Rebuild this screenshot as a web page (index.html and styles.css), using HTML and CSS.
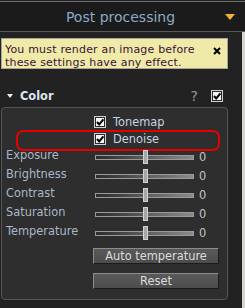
FILE: index.html
```html
<!DOCTYPE html>
<html lang="en">
<head>
    <meta charset="UTF-8">
    <title>Post processing</title>
    <link rel="stylesheet" href="styles.css">
</head>
<body>
    <div class="header">
        <span class="title">Post processing</span>
        <svg class="menu-arrow" width="10" height="6" viewBox="0 0 10 6"><path d="M0 0H10L5 6Z" fill="#f4b232"/></svg>
    </div>

    <div class="main">
        <div class="content">
            <div class="notice">
                <p>You must render an image before<br>these settings have any effect.</p>
                <svg class="notice-close" width="8" height="8" viewBox="0 0 8 8"><path d="M1 1L7 7M7 1L1 7" stroke="#000" stroke-width="2"/></svg>
            </div>

            <div class="section-head">
                <svg class="section-arrow" width="6" height="4" viewBox="0 0 6 4"><path d="M0 0H6L3 4Z" fill="#e8eef4"/></svg>
                <span class="section-title">Color</span>
                <span class="help">?</span>
                <span class="cb"><svg width="10" height="10" viewBox="0 0 10 10"><path d="M2 5L4.2 7.4L8.4 2.4" fill="none" stroke="#000" stroke-width="2"/></svg></span>
            </div>

            <div class="panel">
                <div class="row check-row">
                    <span></span>
                    <label class="check"><span class="cb"><svg width="10" height="10" viewBox="0 0 10 10"><path d="M2 5L4.2 7.4L8.4 2.4" fill="none" stroke="#000" stroke-width="2"/></svg></span>Tonemap</label>
                </div>
                <div class="row check-row marked">
                    <span></span>
                    <label class="check"><span class="cb"><svg width="10" height="10" viewBox="0 0 10 10"><path d="M2 5L4.2 7.4L8.4 2.4" fill="none" stroke="#000" stroke-width="2"/></svg></span>Denoise</label>
                </div>

                <div class="row slider-row">
                    <span class="label">Exposure</span>
                    <div class="slider"><div class="track"><span class="thumb"></span></div><span class="value">0</span></div>
                </div>
                <div class="row slider-row">
                    <span class="label">Brightness</span>
                    <div class="slider"><div class="track"><span class="thumb"></span></div><span class="value">0</span></div>
                </div>
                <div class="row slider-row">
                    <span class="label">Contrast</span>
                    <div class="slider"><div class="track"><span class="thumb"></span></div><span class="value">0</span></div>
                </div>
                <div class="row slider-row">
                    <span class="label">Saturation</span>
                    <div class="slider"><div class="track"><span class="thumb"></span></div><span class="value">0</span></div>
                </div>
                <div class="row slider-row">
                    <span class="label">Temperature</span>
                    <div class="slider"><div class="track"><span class="thumb"></span></div><span class="value">0</span></div>
                </div>

                <div class="buttons">
                    <button class="btn">Auto temperature</button>
                    <button class="btn">Reset</button>
                </div>
            </div>
        </div>
        <div class="edge"></div>
    </div>
</body>
</html>
```

FILE: styles.css
```css
* {
    margin: 0;
    padding: 0;
    box-sizing: border-box;
}

body {
    width: 245px;
    height: 308px;
    overflow: hidden;
    background: #222222;
    font-family: 'DejaVu Sans', Verdana, sans-serif;
    font-size: 11.4px;
}

.header {
    display: flex;
    align-items: center;
    height: 31px;
    margin-top: 1px;
    padding: 0 10px 0 16px;
    background: #1b1b1b;
    border-top: 1px solid #6e6e6e;
    border-bottom: 1px solid #5a5a5a;
}

.title {
    flex: 1;
    text-align: center;
    padding-top: 2px;
    line-height: 27px;
    font-size: 14px;
    color: #8aaac8;
}

.menu-arrow {
    display: block;
}

.main {
    display: flex;
    height: 276px;
}

.content {
    flex: 1;
    padding: 6px 14px 0 1px;
}

.edge {
    width: 3px;
    background: #d6d6ce;
}

.notice {
    display: flex;
    height: 31px;
    padding: 4.8px 0 0 3px;
    background: #efeaa8;
    border: 1px solid #a6a69c;
    color: #3a1238;
    font-size: 11px;
    letter-spacing: 0.19px;
    line-height: 12.8px;
}

.notice p {
    flex: 1;
}

.notice-close {
    margin: 3px 6px 0 0;
}

.section-head {
    display: flex;
    align-items: center;
    height: 16px;
    margin-top: 19px;
    padding: 0 5px 0 6px;
}

.section-title {
    margin-left: 7px;
    font-weight: bold;
    color: #dde6f0;
    line-height: 16px;
}

.help {
    margin-left: auto;
    margin-right: 13px;
    font-size: 14px;
    line-height: 16px;
    color: #969696;
}

.cb {
    display: flex;
    align-items: center;
    justify-content: center;
    width: 12px;
    height: 12px;
    background: #f6f6f6;
    border: 1px solid #d0d0d0;
    box-shadow: inset 0 0 0 1px #2a2a2a;
}

.panel {
    margin-top: 3px;
    padding: 5px 0 10px 4px;
    background: #2e2e2e;
    border: 1px solid #555555;
    border-radius: 4px;
}

.row {
    display: grid;
    grid-template-columns: 88px 1fr;
}

.check-row {
    height: 17px;
    align-items: center;
}

.check {
    display: flex;
    align-items: center;
    gap: 7px;
    color: #c6d4e2;
}

.marked {
    position: relative;
    margin-bottom: 1px;
}

.marked::after {
    content: '';
    position: absolute;
    left: 10px;
    top: 0;
    width: 200px;
    height: 17px;
    border: 2px solid #e60000;
    border-radius: 7px;
}

.slider-row {
    height: 19px;
}

.label {
    line-height: 14px;
    color: #a8b8c8;
}

.slider {
    display: flex;
    align-items: center;
}

.track {
    position: relative;
    width: 99px;
    height: 5px;
    margin-left: 1px;
    border: 1px solid #9a9a9a;
    background: linear-gradient(to right, #2c2c2c, #8a8a8a);
}

.thumb {
    position: absolute;
    left: 47px;
    top: -6px;
    width: 5px;
    height: 14px;
    background: #a6a6a6;
    border: 1px solid #d2d2d2;
}

.value {
    margin-left: 5px;
    color: #c4c4c4;
    line-height: 19px;
}

.buttons {
    display: flex;
    flex-direction: column;
    gap: 9px;
    margin-top: 5px;
    padding-left: 87px;
}

.btn {
    width: 126px;
    height: 16px;
    font-family: inherit;
    font-size: 11.4px;
    line-height: 14px;
    color: #dcdcdc;
    background: linear-gradient(#5a5a5a, #4c4c4c);
    border: 1px solid;
    border-color: #8c8c8c #1c1c1c #1c1c1c #8c8c8c;
}
```
